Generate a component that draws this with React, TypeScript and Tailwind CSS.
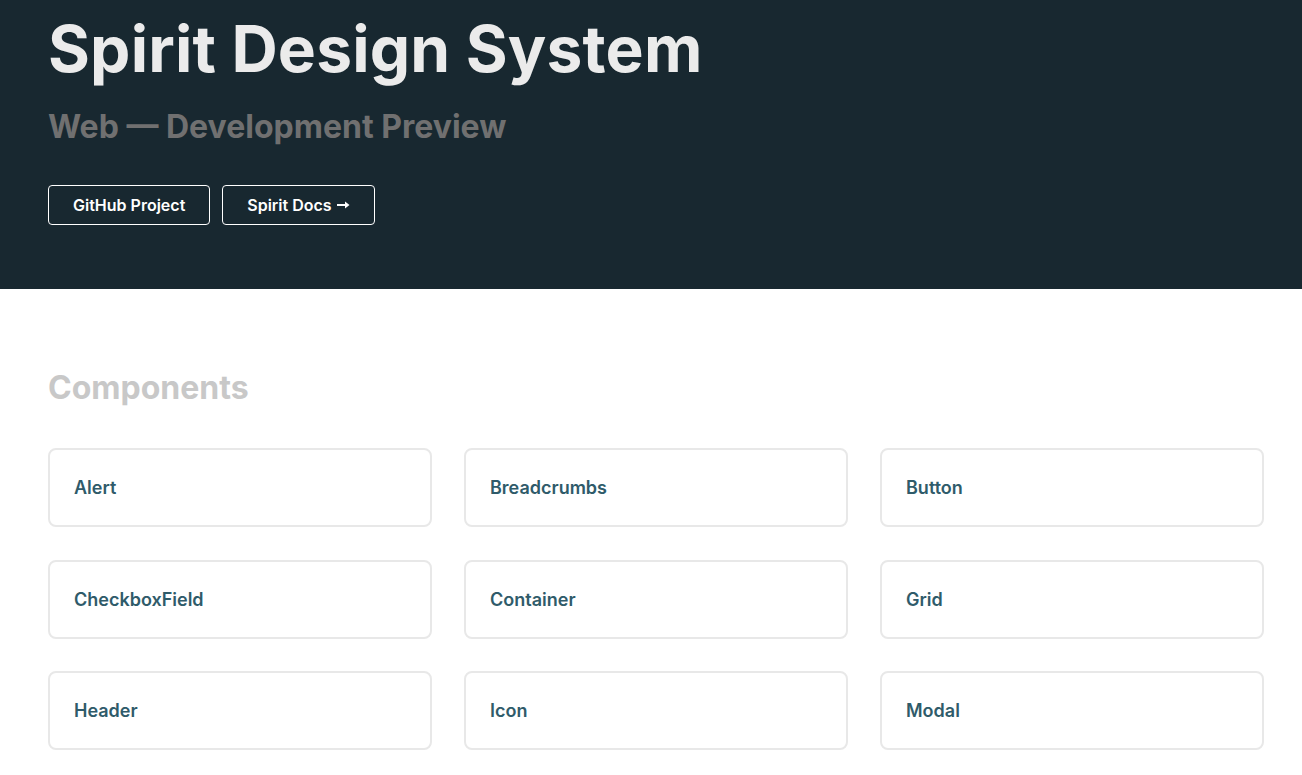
import React from 'react';

const components = [
  'Alert',
  'Breadcrumbs',
  'Button',
  'CheckboxField',
  'Container',
  'Grid',
  'Header',
  'Icon',
  'Modal',
];

const ArrowRight: React.FC = () => (
  <svg width="13" height="10" viewBox="0 0 13 10" className="ml-[5px]" aria-hidden="true">
    <path d="M0 5h9" stroke="currentColor" strokeWidth="2" />
    <path d="M8 1.5L12.5 5L8 8.5z" fill="currentColor" />
  </svg>
);

const App: React.FC = () => (
  <div className="min-h-screen bg-white font-['Inter','Noto_Sans',sans-serif]">
    <header className="bg-[#182830] px-12 pt-[10px] pb-16">
      <h1 className="text-[64px] leading-[77px] font-bold tracking-[0.003em] text-[#ebebeb]">
        Spirit Design System
      </h1>
      <p className="mt-[21px] text-[32px] leading-[38px] font-bold text-[#707070]">
        Web — Development Preview
      </p>
      <div className="mt-[39px] flex gap-3">
        <a
          href="#"
          className="h-10 px-6 flex items-center rounded border border-white text-white text-base font-semibold"
        >
          GitHub Project
        </a>
        <a
          href="#"
          className="h-10 px-6 flex items-center rounded border border-white text-white text-base font-semibold"
        >
          Spirit Docs
          <ArrowRight />
        </a>
      </div>
    </header>

    <main className="px-12 pt-[80px] pb-12">
      <h2 className="text-[32px] leading-[38px] font-bold text-[#c8c8c8]">Components</h2>
      <div className="mt-[41px] grid grid-cols-3 gap-x-8 gap-y-[32.5px] w-[1216px]">
        {components.map((name) => (
          <a
            key={name}
            href="#"
            className="block h-[79px] rounded-lg border-2 border-[#e8e8e8] px-6 pt-6 text-lg leading-[27px] font-semibold text-[#2f5b6a]"
          >
            {name}
          </a>
        ))}
      </div>
    </main>
  </div>
);

export default App;
